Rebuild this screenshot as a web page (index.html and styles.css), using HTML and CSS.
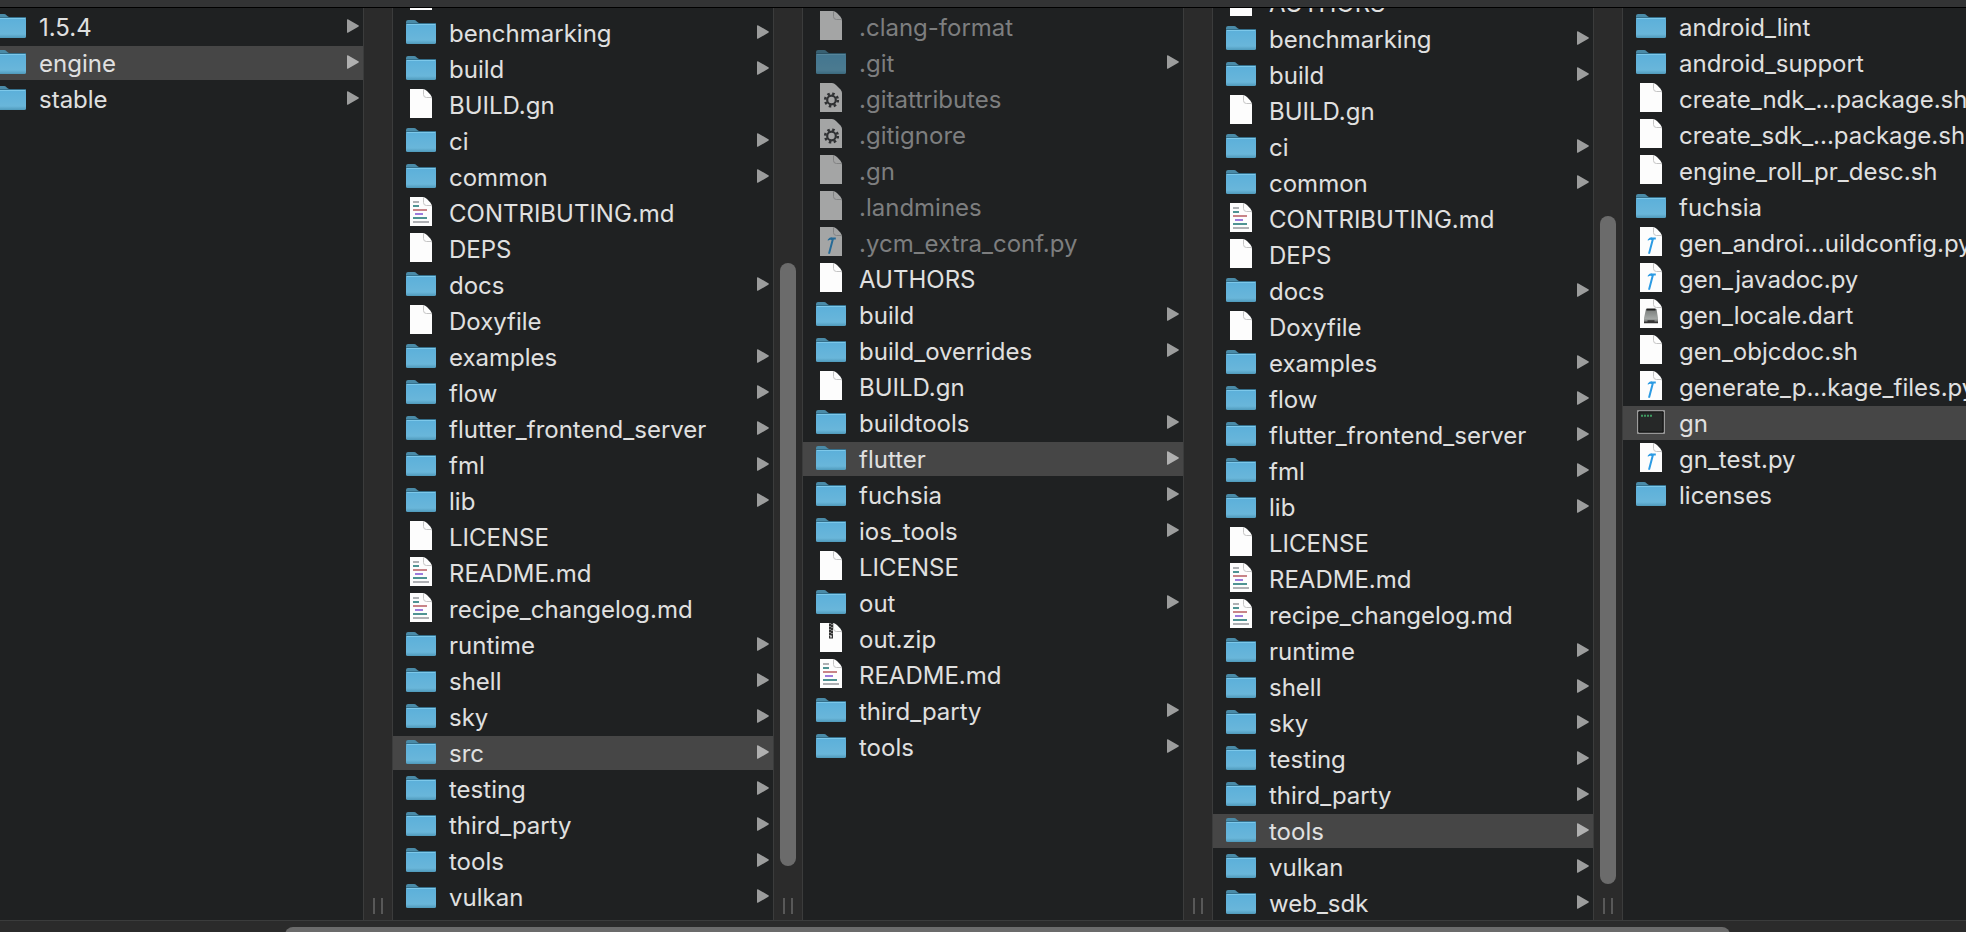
FILE: index.html
```html
<!DOCTYPE html>
<html lang="en">
<head>
<meta charset="utf-8">
<title>Files</title>
<link rel="stylesheet" href="styles.css">
</head>
<body>
<svg class="defs" aria-hidden="true">
  <defs>
    <linearGradient id="folder-face" x1="0" y1="0" x2="0" y2="1">
      <stop offset="0" stop-color="#5cb0da"/><stop offset="0.8" stop-color="#69b6da"/><stop offset="1" stop-color="#4f99ba"/>
    </linearGradient>
    <linearGradient id="drive-face" x1="0" y1="0" x2="0" y2="1">
      <stop offset="0" stop-color="#777b79"/><stop offset="0.7" stop-color="#a5a9a7"/><stop offset="1" stop-color="#4a4c4b"/>
    </linearGradient>
    <symbol id="folder" viewBox="0 -2 30 30">
      <path d="M0 8V4q0-2 2-2h6q1.500 0 2.500 1.300T13 5h15.500q1.500 0 1.500 1.500V12H0z" fill="#4a8ba8"/>
      <path d="M0 8q0-1.500 1-1.500h28q1 0 1 1.500v16.500q0 1.500-1.500 1.500h-27Q0 26 0 24.500z" fill="url(#folder-face)"/>
      <path d="M0 5.500h30" stroke="#34708c" stroke-width="1"/>
      <path d="M.5 6.500h29" stroke="#7cc8ea" stroke-width="1"/>
    </symbol>
    <symbol id="file" viewBox="0 0 30 30">
      <path d="M4 1h12.500q2.500 0 4.500 2l3.500 3.800Q26 8.500 26 11v19H4z" fill="#fdfdfd"/>
      <path d="M17.500 1.500v5q0 3 3 3h5" fill="none" stroke="#c4c4c4" stroke-width="1"/>
    </symbol>
    <symbol id="markdown" viewBox="0 0 30 30">
      <use href="#file"/>
      <path d="M7 6h6M7 26h16" stroke="#aeb0b4" stroke-width="2"/>
      <path d="M7 10h6M7 22h14" stroke="#4f9393" stroke-width="2"/>
      <path d="M7 14h14" stroke="#c88488" stroke-width="2"/>
      <path d="M9 18h8" stroke="#9d7bdc" stroke-width="2"/>
    </symbol>
    <symbol id="python" viewBox="0 0 30 30">
      <use href="#file"/>
      <path d="M11.800 13.400q2-2.300 4.400-2h3.600v2.100h-2l-3.700 14q-1.300 1-2-.3l3.500-13.300q-1.900-.6-3.800.9z" fill="#2c9be3"/>
    </symbol>
    <symbol id="gear" viewBox="0 0 30 30">
      <path d="M4 1h12q2 0 4 2l4.500 4.500Q26 9 26 11v19H4z" fill="#fdfdfd"/>
      <circle cx="15.500" cy="18" r="6.300" fill="none" stroke="#3c3e40" stroke-width="2.600" stroke-dasharray="2.470 2.470"/>
      <circle cx="15.500" cy="18" r="4.300" fill="none" stroke="#3c3e40" stroke-width="2.200"/>
    </symbol>
    <symbol id="zip" viewBox="0 0 30 30">
      <use href="#file"/>
      <path d="M13 1h4v15.500h-4z" fill="#333"/>
      <path d="M14 1v13M16 2v12" stroke="#d8d8d8" stroke-width="1" stroke-dasharray="1 2"/>
      <path d="M14.300 13.500h1.400v2h-1.400z" fill="#fff"/>
    </symbol>
    <symbol id="dart" viewBox="0 0 30 30">
      <use href="#file"/>
      <path d="M10 11h10.500l1.500 9v5H8v-5z" fill="url(#drive-face)"/>
      <path d="M10.500 11.500h9" stroke="#202020" stroke-width="2"/>
      <path d="M8 24.500h14M11.500 23h7" stroke="#353535" stroke-width="1.500"/>
    </symbol>
    <symbol id="terminal" viewBox="0 0 30 30">
      <path d="M1.800 4.800h26.400v22.400H1.800z" fill="#262828" stroke="#b5b5b5" stroke-width="1.200"/>
      <path d="M2.900 5.900h24.200v20.200H2.900z" fill="none" stroke="#111" stroke-width="1"/>
      <path d="M5 9.700h11" stroke="#3f9a60" stroke-width="2" stroke-dasharray="2 1"/>
    </symbol>
    <symbol id="arrow" viewBox="0 0 12 14">
      <path d="M0 1Q0-.3 1.300.4l10 5.900q1.200.7 0 1.400l-10 5.900Q0 14.300 0 13z" fill="currentColor"/>
    </symbol>
  </defs>
</svg>
<main class="browser">
  <header class="toolbar-edge"></header>
  <div class="columns">
    <section class="column" aria-label="flutter versions">
      <ul class="list list-cut">
        <li><button class="row"><svg class="icon"><use href="#folder"/></svg><span class="name">1.5.4</span><svg class="arrow"><use href="#arrow"/></svg></button></li>
        <li><button class="row selected"><svg class="icon"><use href="#folder"/></svg><span class="name">engine</span><svg class="arrow"><use href="#arrow"/></svg></button></li>
        <li><button class="row"><svg class="icon"><use href="#folder"/></svg><span class="name">stable</span><svg class="arrow"><use href="#arrow"/></svg></button></li>
      </ul>
    </section>
    <div class="gutter"><i class="grip"></i></div>
    <section class="column" aria-label="engine">
      <ul class="list list-engine">
        <li><button class="row"><svg class="icon"><use href="#file"/></svg><span class="name">AUTHORS</span></button></li>
        <li><button class="row"><svg class="icon"><use href="#folder"/></svg><span class="name">benchmarking</span><svg class="arrow"><use href="#arrow"/></svg></button></li>
        <li><button class="row"><svg class="icon"><use href="#folder"/></svg><span class="name">build</span><svg class="arrow"><use href="#arrow"/></svg></button></li>
        <li><button class="row"><svg class="icon"><use href="#file"/></svg><span class="name">BUILD.gn</span></button></li>
        <li><button class="row"><svg class="icon"><use href="#folder"/></svg><span class="name">ci</span><svg class="arrow"><use href="#arrow"/></svg></button></li>
        <li><button class="row"><svg class="icon"><use href="#folder"/></svg><span class="name">common</span><svg class="arrow"><use href="#arrow"/></svg></button></li>
        <li><button class="row"><svg class="icon"><use href="#markdown"/></svg><span class="name">CONTRIBUTING.md</span></button></li>
        <li><button class="row"><svg class="icon"><use href="#file"/></svg><span class="name">DEPS</span></button></li>
        <li><button class="row"><svg class="icon"><use href="#folder"/></svg><span class="name">docs</span><svg class="arrow"><use href="#arrow"/></svg></button></li>
        <li><button class="row"><svg class="icon"><use href="#file"/></svg><span class="name">Doxyfile</span></button></li>
        <li><button class="row"><svg class="icon"><use href="#folder"/></svg><span class="name">examples</span><svg class="arrow"><use href="#arrow"/></svg></button></li>
        <li><button class="row"><svg class="icon"><use href="#folder"/></svg><span class="name">flow</span><svg class="arrow"><use href="#arrow"/></svg></button></li>
        <li><button class="row"><svg class="icon"><use href="#folder"/></svg><span class="name">flutter_frontend_server</span><svg class="arrow"><use href="#arrow"/></svg></button></li>
        <li><button class="row"><svg class="icon"><use href="#folder"/></svg><span class="name">fml</span><svg class="arrow"><use href="#arrow"/></svg></button></li>
        <li><button class="row"><svg class="icon"><use href="#folder"/></svg><span class="name">lib</span><svg class="arrow"><use href="#arrow"/></svg></button></li>
        <li><button class="row"><svg class="icon"><use href="#file"/></svg><span class="name">LICENSE</span></button></li>
        <li><button class="row"><svg class="icon"><use href="#markdown"/></svg><span class="name">README.md</span></button></li>
        <li><button class="row"><svg class="icon"><use href="#markdown"/></svg><span class="name">recipe_changelog.md</span></button></li>
        <li><button class="row"><svg class="icon"><use href="#folder"/></svg><span class="name">runtime</span><svg class="arrow"><use href="#arrow"/></svg></button></li>
        <li><button class="row"><svg class="icon"><use href="#folder"/></svg><span class="name">shell</span><svg class="arrow"><use href="#arrow"/></svg></button></li>
        <li><button class="row"><svg class="icon"><use href="#folder"/></svg><span class="name">sky</span><svg class="arrow"><use href="#arrow"/></svg></button></li>
        <li><button class="row selected"><svg class="icon"><use href="#folder"/></svg><span class="name">src</span><svg class="arrow"><use href="#arrow"/></svg></button></li>
        <li><button class="row"><svg class="icon"><use href="#folder"/></svg><span class="name">testing</span><svg class="arrow"><use href="#arrow"/></svg></button></li>
        <li><button class="row"><svg class="icon"><use href="#folder"/></svg><span class="name">third_party</span><svg class="arrow"><use href="#arrow"/></svg></button></li>
        <li><button class="row"><svg class="icon"><use href="#folder"/></svg><span class="name">tools</span><svg class="arrow"><use href="#arrow"/></svg></button></li>
        <li><button class="row"><svg class="icon"><use href="#folder"/></svg><span class="name">vulkan</span><svg class="arrow"><use href="#arrow"/></svg></button></li>
      </ul>
    </section>
    <div class="gutter"><div class="track track-engine"><i class="thumb"></i></div><i class="grip"></i></div>
    <section class="column" aria-label="src">
      <ul class="list">
        <li><button class="row hidden-file"><svg class="icon"><use href="#file"/></svg><span class="name">.clang-format</span></button></li>
        <li><button class="row hidden-file"><svg class="icon"><use href="#folder"/></svg><span class="name">.git</span><svg class="arrow"><use href="#arrow"/></svg></button></li>
        <li><button class="row hidden-file"><svg class="icon"><use href="#gear"/></svg><span class="name">.gitattributes</span></button></li>
        <li><button class="row hidden-file"><svg class="icon"><use href="#gear"/></svg><span class="name">.gitignore</span></button></li>
        <li><button class="row hidden-file"><svg class="icon"><use href="#file"/></svg><span class="name">.gn</span></button></li>
        <li><button class="row hidden-file"><svg class="icon"><use href="#file"/></svg><span class="name">.landmines</span></button></li>
        <li><button class="row hidden-file"><svg class="icon"><use href="#python"/></svg><span class="name">.ycm_extra_conf.py</span></button></li>
        <li><button class="row"><svg class="icon"><use href="#file"/></svg><span class="name">AUTHORS</span></button></li>
        <li><button class="row"><svg class="icon"><use href="#folder"/></svg><span class="name">build</span><svg class="arrow"><use href="#arrow"/></svg></button></li>
        <li><button class="row"><svg class="icon"><use href="#folder"/></svg><span class="name">build_overrides</span><svg class="arrow"><use href="#arrow"/></svg></button></li>
        <li><button class="row"><svg class="icon"><use href="#file"/></svg><span class="name">BUILD.gn</span></button></li>
        <li><button class="row"><svg class="icon"><use href="#folder"/></svg><span class="name">buildtools</span><svg class="arrow"><use href="#arrow"/></svg></button></li>
        <li><button class="row selected"><svg class="icon"><use href="#folder"/></svg><span class="name">flutter</span><svg class="arrow"><use href="#arrow"/></svg></button></li>
        <li><button class="row"><svg class="icon"><use href="#folder"/></svg><span class="name">fuchsia</span><svg class="arrow"><use href="#arrow"/></svg></button></li>
        <li><button class="row"><svg class="icon"><use href="#folder"/></svg><span class="name">ios_tools</span><svg class="arrow"><use href="#arrow"/></svg></button></li>
        <li><button class="row"><svg class="icon"><use href="#file"/></svg><span class="name">LICENSE</span></button></li>
        <li><button class="row"><svg class="icon"><use href="#folder"/></svg><span class="name">out</span><svg class="arrow"><use href="#arrow"/></svg></button></li>
        <li><button class="row"><svg class="icon"><use href="#zip"/></svg><span class="name">out.zip</span></button></li>
        <li><button class="row"><svg class="icon"><use href="#markdown"/></svg><span class="name">README.md</span></button></li>
        <li><button class="row"><svg class="icon"><use href="#folder"/></svg><span class="name">third_party</span><svg class="arrow"><use href="#arrow"/></svg></button></li>
        <li><button class="row"><svg class="icon"><use href="#folder"/></svg><span class="name">tools</span><svg class="arrow"><use href="#arrow"/></svg></button></li>
      </ul>
    </section>
    <div class="gutter"><i class="grip"></i></div>
    <section class="column" aria-label="flutter">
      <ul class="list list-flutter">
        <li><button class="row"><svg class="icon"><use href="#file"/></svg><span class="name">AUTHORS</span></button></li>
        <li><button class="row"><svg class="icon"><use href="#folder"/></svg><span class="name">benchmarking</span><svg class="arrow"><use href="#arrow"/></svg></button></li>
        <li><button class="row"><svg class="icon"><use href="#folder"/></svg><span class="name">build</span><svg class="arrow"><use href="#arrow"/></svg></button></li>
        <li><button class="row"><svg class="icon"><use href="#file"/></svg><span class="name">BUILD.gn</span></button></li>
        <li><button class="row"><svg class="icon"><use href="#folder"/></svg><span class="name">ci</span><svg class="arrow"><use href="#arrow"/></svg></button></li>
        <li><button class="row"><svg class="icon"><use href="#folder"/></svg><span class="name">common</span><svg class="arrow"><use href="#arrow"/></svg></button></li>
        <li><button class="row"><svg class="icon"><use href="#markdown"/></svg><span class="name">CONTRIBUTING.md</span></button></li>
        <li><button class="row"><svg class="icon"><use href="#file"/></svg><span class="name">DEPS</span></button></li>
        <li><button class="row"><svg class="icon"><use href="#folder"/></svg><span class="name">docs</span><svg class="arrow"><use href="#arrow"/></svg></button></li>
        <li><button class="row"><svg class="icon"><use href="#file"/></svg><span class="name">Doxyfile</span></button></li>
        <li><button class="row"><svg class="icon"><use href="#folder"/></svg><span class="name">examples</span><svg class="arrow"><use href="#arrow"/></svg></button></li>
        <li><button class="row"><svg class="icon"><use href="#folder"/></svg><span class="name">flow</span><svg class="arrow"><use href="#arrow"/></svg></button></li>
        <li><button class="row"><svg class="icon"><use href="#folder"/></svg><span class="name">flutter_frontend_server</span><svg class="arrow"><use href="#arrow"/></svg></button></li>
        <li><button class="row"><svg class="icon"><use href="#folder"/></svg><span class="name">fml</span><svg class="arrow"><use href="#arrow"/></svg></button></li>
        <li><button class="row"><svg class="icon"><use href="#folder"/></svg><span class="name">lib</span><svg class="arrow"><use href="#arrow"/></svg></button></li>
        <li><button class="row"><svg class="icon"><use href="#file"/></svg><span class="name">LICENSE</span></button></li>
        <li><button class="row"><svg class="icon"><use href="#markdown"/></svg><span class="name">README.md</span></button></li>
        <li><button class="row"><svg class="icon"><use href="#markdown"/></svg><span class="name">recipe_changelog.md</span></button></li>
        <li><button class="row"><svg class="icon"><use href="#folder"/></svg><span class="name">runtime</span><svg class="arrow"><use href="#arrow"/></svg></button></li>
        <li><button class="row"><svg class="icon"><use href="#folder"/></svg><span class="name">shell</span><svg class="arrow"><use href="#arrow"/></svg></button></li>
        <li><button class="row"><svg class="icon"><use href="#folder"/></svg><span class="name">sky</span><svg class="arrow"><use href="#arrow"/></svg></button></li>
        <li><button class="row"><svg class="icon"><use href="#folder"/></svg><span class="name">testing</span><svg class="arrow"><use href="#arrow"/></svg></button></li>
        <li><button class="row"><svg class="icon"><use href="#folder"/></svg><span class="name">third_party</span><svg class="arrow"><use href="#arrow"/></svg></button></li>
        <li><button class="row selected"><svg class="icon"><use href="#folder"/></svg><span class="name">tools</span><svg class="arrow"><use href="#arrow"/></svg></button></li>
        <li><button class="row"><svg class="icon"><use href="#folder"/></svg><span class="name">vulkan</span><svg class="arrow"><use href="#arrow"/></svg></button></li>
        <li><button class="row"><svg class="icon"><use href="#folder"/></svg><span class="name">web_sdk</span><svg class="arrow"><use href="#arrow"/></svg></button></li>
      </ul>
    </section>
    <div class="gutter"><div class="track track-flutter"><i class="thumb"></i></div><i class="grip"></i></div>
    <section class="column" aria-label="tools">
      <ul class="list">
        <li><button class="row"><svg class="icon"><use href="#folder"/></svg><span class="name">android_lint</span></button></li>
        <li><button class="row"><svg class="icon"><use href="#folder"/></svg><span class="name">android_support</span></button></li>
        <li><button class="row"><svg class="icon"><use href="#file"/></svg><span class="name">create_ndk_...package.sh</span></button></li>
        <li><button class="row"><svg class="icon"><use href="#file"/></svg><span class="name">create_sdk_...package.sh</span></button></li>
        <li><button class="row"><svg class="icon"><use href="#file"/></svg><span class="name">engine_roll_pr_desc.sh</span></button></li>
        <li><button class="row"><svg class="icon"><use href="#folder"/></svg><span class="name">fuchsia</span></button></li>
        <li><button class="row"><svg class="icon"><use href="#python"/></svg><span class="name">gen_androi...uildconfig.py</span></button></li>
        <li><button class="row"><svg class="icon"><use href="#python"/></svg><span class="name">gen_javadoc.py</span></button></li>
        <li><button class="row"><svg class="icon"><use href="#dart"/></svg><span class="name">gen_locale.dart</span></button></li>
        <li><button class="row"><svg class="icon"><use href="#file"/></svg><span class="name">gen_objcdoc.sh</span></button></li>
        <li><button class="row"><svg class="icon"><use href="#python"/></svg><span class="name">generate_p...kage_files.py</span></button></li>
        <li><button class="row selected"><svg class="icon"><use href="#terminal"/></svg><span class="name">gn</span></button></li>
        <li><button class="row"><svg class="icon"><use href="#python"/></svg><span class="name">gn_test.py</span></button></li>
        <li><button class="row"><svg class="icon"><use href="#folder"/></svg><span class="name">licenses</span></button></li>
      </ul>
    </section>
  </div>
  <footer class="scrollbar"><i class="scrollbar-thumb"></i></footer>
</main>
</body>
</html>
```
FILE: styles.css
```css
* {
  box-sizing: border-box;
}

body {
  margin: 0;
  background: #1f2122;
  color: #e0e0e0;
  font-family: Inter, "Liberation Sans", sans-serif;
  font-size: 24px;
}

.defs {
  position: absolute;
  width: 0;
  height: 0;
}

.browser {
  display: flex;
  flex-direction: column;
  height: 100vh;
  overflow: hidden;
}

.toolbar-edge {
  flex: none;
  height: 8px;
  background: #323334;
  border-bottom: 1px solid #000;
}

.columns {
  flex: 1;
  min-height: 0;
  display: grid;
  grid-template-columns:
    minmax(0, 363fr) 30px minmax(0, 380fr) 30px minmax(0, 380fr)
    30px minmax(0, 380fr) 30px minmax(0, 343fr);
  grid-template-rows: minmax(0, 1fr);
}

.column {
  overflow: hidden;
}

.list {
  list-style: none;
  margin: 0;
  padding: 2px 0 0;
}

/* Columns that are scrolled part of the way down or across. */
.list-cut {
  margin-left: -17px;
}

.list-engine {
  margin-top: -30px;
}

.list-flutter {
  margin-top: -24px;
}

.row {
  display: flex;
  align-items: center;
  width: 100%;
  height: 34px;
  margin: 0 0 2px;
  padding: 0 4px 0 13px;
  gap: 13px;
  border: 0;
  background: none;
  color: inherit;
  font: inherit;
  line-height: 34px;
  text-align: left;
}

.row.selected {
  background: #464646;
}

.icon {
  flex: none;
  align-self: flex-start;
  width: 30px;
  height: 30px;
}

.name {
  flex: 1;
  min-width: 0;
  padding-top: 2px;
  white-space: nowrap;
}

.arrow {
  flex: none;
  width: 12px;
  height: 14px;
  margin-bottom: 2px;
  color: #9c9d9d;
}

.selected .arrow {
  color: #b0b0b0;
}

.hidden-file .name {
  color: #7d7e7f;
}

.hidden-file .icon {
  opacity: 0.6;
}

.gutter {
  display: flex;
  flex-direction: column;
  align-items: center;
  padding-bottom: 6px;
  background: #2b2b2b;
  border: solid #3b3c3c;
  border-width: 0 1px;
}

.track {
  flex: 1;
  display: flex;
  width: 16px;
}

.track-engine {
  padding: 255px 0 32px;
}

.track-flutter {
  padding: 208px 0 14px;
}

.thumb {
  flex: 1;
  border-radius: 8px;
  background: #6b6b6b;
}

.grip {
  width: 10px;
  height: 16px;
  margin-top: auto;
  border: solid #585858;
  border-width: 0 2px;
}

.scrollbar {
  flex: none;
  height: 12px;
  padding-top: 6px;
  overflow: hidden;
  background: #2b2b2b;
  border-top: 1px solid #3b3c3c;
}

.scrollbar-thumb {
  display: block;
  width: 73.5%;
  height: 16px;
  margin-left: 14.5%;
  border-radius: 8px;
  background: #6b6b6b;
}
```
